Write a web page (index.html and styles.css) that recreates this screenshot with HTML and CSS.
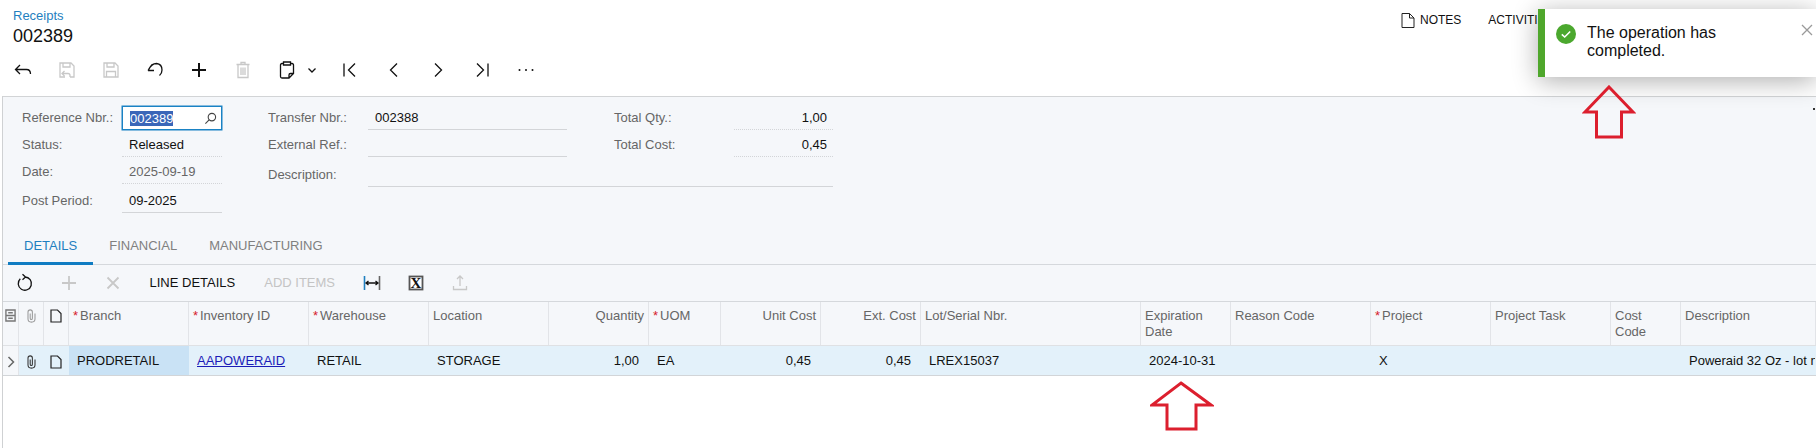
FILE: index.html
```
<!DOCTYPE html>
<html lang="en">
<head>
<meta charset="utf-8">
<title>Receipts</title>
<link rel="stylesheet" href="styles.css">
</head>
<body>
<div class="page">
  <header class="head">
    <div class="titlebar">
      <div class="title">
        <a class="crumb">Receipts</a>
        <div class="docnum">002389</div>
      </div>
      <div class="tools">
        <span class="tool">
          <svg class="ic-note" viewBox="0 0 14 15"><path d="M1 .5H8.5L13 5V14.5H1Z M8.5 .5V5H13"/></svg>NOTES
        </span>
        <span class="tool">ACTIVITIES</span>
      </div>
    </div>
    <div class="bar">
      <button class="ib"><svg viewBox="0 0 20 20"><path d="M7 5 2.500 9.500 7 14M2.500 9.500H13.500Q17.500 9.500 17.500 14"/></svg></button>
      <button class="ib off"><svg viewBox="0 0 20 20"><path d="M8 17H3V3H14L17 6V17H13M6 3V7H13V3M5 13.500H11Q13 13.500 13 15.500V17M7.500 11 5 13.500 7.500 16"/></svg></button>
      <button class="ib off"><svg viewBox="0 0 20 20"><path d="M3 3H14L17 6V17H3ZM6 3V7H13V3M5.500 17V11.500H14.500V17"/></svg></button>
      <button class="ib"><svg viewBox="0 0 20 20"><path d="M3 10.500 7 4.500M3 10.500 9 10.500M3.600 9.600Q6.500 3.500 11.500 3.500 17 4 17 10 17 13.500 14.500 15.500"/></svg></button>
      <button class="ib"><svg class="thick" viewBox="0 0 20 20"><path d="M10 3V17M3 10H17"/></svg></button>
      <button class="ib off"><svg viewBox="0 0 20 20"><path d="M3.500 4.500H16.500M8 4.500V2.500H12V4.500M5 4.500V17.500H15V4.500M8 7.500V15M12 7.500V15M10 7.500V15"/></svg></button>
      <button class="ib wide">
        <svg viewBox="0 0 20 20"><path d="M6.500 3.500H5Q3.500 3.500 3.500 5V16.500Q3.500 18 5 18H12L16.500 13.500V5Q16.500 3.500 15 3.500H13.500M6.500 2H13.500V5H6.500ZM12 18V15Q12 13.500 13.500 13.500H16.500"/></svg>
        <svg class="mini" viewBox="0 0 10 10"><path d="M1.500 3.500 5 7 8.500 3.500"/></svg>
      </button>
      <button class="ib"><svg viewBox="0 0 20 20"><path d="M4 3.500V16.500M15 3.500 8.500 10 15 16.500"/></svg></button>
      <button class="ib"><svg viewBox="0 0 20 20"><path d="M13 3.500 6.500 10 13 16.500"/></svg></button>
      <button class="ib"><svg viewBox="0 0 20 20"><path d="M7 3.500 13.500 10 7 16.500"/></svg></button>
      <button class="ib"><svg viewBox="0 0 20 20"><path d="M16 3.500V16.500M5 3.500 11.500 10 5 16.500"/></svg></button>
      <button class="ib"><svg viewBox="0 0 20 20"><circle class="dot" cx="3.500" cy="10" r="1"/><circle class="dot" cx="10" cy="10" r="1"/><circle class="dot" cx="16.500" cy="10" r="1"/></svg></button>
    </div>
  </header>

  <main class="main">
    <section class="form">
      <div class="fgrid left">
        <label class="lb">Reference Nbr.:</label>
        <div class="selector"><span class="sel">002389</span>
          <svg class="search" viewBox="0 0 14 14"><circle cx="8.500" cy="5.500" r="4"/><path d="M5.500 8.500 1.500 12.500"/></svg>
        </div>
        <label class="lb">Status:</label><div class="val dots">Released</div>
        <label class="lb">Date:</label><div class="val dots mut">2025-09-19</div>
        <label class="lb">Post Period:</label><div class="val line">09-2025</div>
      </div>
      <div class="fgrid right">
        <label class="lb">Transfer Nbr.:</label><div class="val line">002388</div>
        <span></span>
        <label class="lb">Total Qty.:</label><div class="val dots num">1,00</div>
        <label class="lb">External Ref.:</label><div class="val line"></div>
        <span></span>
        <label class="lb">Total Cost:</label><div class="val dots num">0,45</div>
        <label class="lb">Description:</label><div class="val line span"></div>
      </div>
      <i class="speck"></i>
    </section>

    <nav class="tabs">
      <a class="tab on">DETAILS</a>
      <a class="tab">FINANCIAL</a>
      <a class="tab">MANUFACTURING</a>
    </nav>

    <div class="gridbar">
      <button class="ib"><svg viewBox="0 0 20 20"><path d="M5.300 5.800A6.600 6.600 0 1 0 10 4M7.500 1.200 10.500 4 7.500 6.800"/></svg></button>
      <button class="ib off"><svg class="wideline" viewBox="0 0 20 20"><path d="M10 3V17M3 10H17"/></svg></button>
      <button class="ib off"><svg class="wideline" viewBox="0 0 20 20"><path d="M4.500 4.500 15.500 15.500M15.500 4.500 4.500 15.500"/></svg></button>
      <button class="tb">LINE DETAILS</button>
      <button class="tb off">ADD ITEMS</button>
      <button class="ib"><svg viewBox="0 0 20 20"><path class="fit-l" d="M2.500 3V17"/><path class="fit-r" d="M17.500 3V17"/><path d="M4 10H16M6.500 8 4 10 6.500 12M13.500 8 16 10 13.500 12"/></svg></button>
      <button class="ib"><svg viewBox="0 0 20 20"><rect class="xl" x="3.500" y="3.500" width="13" height="13"/><text class="xl-t" x="10" y="15">X</text></svg></button>
      <button class="ib off"><svg viewBox="0 0 20 20"><path d="M10 3V13M7 6 10 3 13 6M3.500 13V16.500H16.500V13"/></svg></button>
    </div>

    <div class="grid">
      <div class="row hdr">
        <div class="c"><svg class="gi gray" viewBox="0 0 12 14"><path d="M1 1H11V13H1ZM1 7H11M3.500 4H8.500M3.500 10H8.500"/></svg></div>
        <div class="c"><svg class="gi clip lite" viewBox="0 0 10 16"><path d="M9 5V11.500Q9 15 5 15 1 15 1 11.500V3.500Q1 1 3.500 1 6 1 6 3.500V10.500Q6 12 4.800 12 3.500 12 3.500 10.500V5"/></svg></div>
        <div class="c"><svg class="gi doc" viewBox="0 0 12 14"><path d="M1 1H7.500L11 4.500V13H1Z"/></svg></div>
        <div class="c"><span class="req">*</span>Branch</div>
        <div class="c"><span class="req">*</span>Inventory ID</div>
        <div class="c"><span class="req">*</span>Warehouse</div>
        <div class="c">Location</div>
        <div class="c r">Quantity</div>
        <div class="c"><span class="req">*</span>UOM</div>
        <div class="c r">Unit Cost</div>
        <div class="c r">Ext. Cost</div>
        <div class="c">Lot/Serial Nbr.</div>
        <div class="c">Expiration Date</div>
        <div class="c">Reason Code</div>
        <div class="c"><span class="req">*</span>Project</div>
        <div class="c">Project Task</div>
        <div class="c">Cost Code</div>
        <div class="c">Description</div>
      </div>
      <div class="row data">
        <div class="c lead"><svg class="gi chev" viewBox="0 0 8 12"><path d="M1.500 1 6.500 6 1.500 11"/></svg></div>
        <div class="c"><svg class="gi clip" viewBox="0 0 10 16"><path d="M9 5V11.500Q9 15 5 15 1 15 1 11.500V3.500Q1 1 3.500 1 6 1 6 3.500V10.500Q6 12 4.800 12 3.500 12 3.500 10.500V5"/></svg></div>
        <div class="c"><svg class="gi doc" viewBox="0 0 12 14"><path d="M1 1H7.500L11 4.500V13H1Z"/></svg></div>
        <div class="c cur">PRODRETAIL</div>
        <div class="c"><a class="link">AAPOWERAID</a></div>
        <div class="c">RETAIL</div>
        <div class="c">STORAGE</div>
        <div class="c r">1,00</div>
        <div class="c">EA</div>
        <div class="c r">0,45</div>
        <div class="c r">0,45</div>
        <div class="c">LREX15037</div>
        <div class="c">2024-10-31</div>
        <div class="c"></div>
        <div class="c">X</div>
        <div class="c"></div>
        <div class="c"></div>
        <div class="c">Poweraid 32 Oz - lot number</div>
      </div>
    </div>
  </main>

  <aside class="toast">
    <svg class="ok" viewBox="0 0 20 20"><circle cx="10" cy="10" r="10"/><path d="M5.800 10.300 8.700 13 14.200 7.500"/></svg>
    <p class="msg">The operation has completed.</p>
    <svg class="close" viewBox="0 0 12 12"><path d="M1 1 11 11M11 1 1 11"/></svg>
  </aside>

  <svg class="arrow a1" viewBox="0 0 54 54"><path d="M27 2 51 27H39.500V52H14.500V27H3Z"/></svg>
  <svg class="arrow a2" viewBox="0 0 64 50"><path d="M31 2 61 24H46V48H17V24H2Z"/></svg>
</div>
</body>
</html>
```
FILE: styles.css
```
* { box-sizing: border-box; }
html, body { margin: 0; padding: 0; background: #fff; }
body { font: 13px/16px "Liberation Sans", Arial, sans-serif; color: #111; }
button { font: inherit; border: 0; background: none; padding: 0; margin: 0; color: inherit; }
p { margin: 0; }

.page { position: relative; width: 1816px; height: 448px; overflow: hidden; }

/* page header */
.head { height: 96px; }
.titlebar { display: flex; justify-content: space-between; height: 50px; padding: 8px 0 0 13px; }
.crumb { display: block; color: #1f7fc0; font-size: 13px; line-height: 16px; }
.docnum { font-size: 18px; line-height: 24px; color: #111; }
.tools { display: flex; gap: 27px; width: 415px; padding-top: 4px; font-size: 12px; line-height: 16px; }
.tool { display: flex; align-items: center; height: 16px; color: #111; }
.ic-note { width: 14px; height: 15px; margin-right: 5px; fill: none; stroke: #222; stroke-width: 1; }

.bar { display: flex; height: 39px; padding-left: 1px; align-items: center; }
.ib { display: flex; flex: none; align-items: center; justify-content: center; width: 44px; height: 36px; color: #111; }
.ib svg { width: 20px; height: 20px; fill: none; stroke: currentColor; stroke-width: 1.3; }
.ib.off { color: #c8c8c8; }
.ib.wide { width: 63px; justify-content: flex-start; padding-left: 12px; gap: 10px; }
.ib .mini { width: 10px; height: 10px; }
.ib .thick { stroke-width: 2; }
.ib .wideline { stroke-width: 1.8; }
.ib .dot { fill: currentColor; stroke: none; }

/* main panel */
.main { margin-left: 2px; height: 352px; border-left: 1px solid #cfd1d3; }
.form { position: relative; display: flex; height: 132px; padding: 9px 0 0 19px; background: #f5f7fa; border-top: 1px solid #d2d4d6; }
.fgrid { display: grid; }
.left { grid-template-columns: 100px 100px; grid-template-rows: 24px 27px 27px 29px; }
.right { margin-left: 46px; grid-template-columns: 100px 199px 47px 120px 99px; grid-template-rows: 24px 27px 30px; }
.lb { display: flex; align-items: flex-end; color: #666; padding-bottom: 4.5px; height: 100%; }
.val { display: flex; align-items: flex-end; padding: 0 7px 3px; height: 100%; color: #111; }
.val.span { grid-column: 2 / -1; }
.val.mut { color: #666; }
.val.line { border-bottom: 1px solid #d3d5d8; }
.val.dots { border-bottom: 1px dotted #d3d5d8; }
.val.num { justify-content: flex-end; padding-right: 6px; }
.selector { position: relative; display: flex; align-items: center; padding-left: 7px; background: #fff; border: 1px solid #1a82c4; box-shadow: 0 0 0 .5px #1a82c4; }
.sel { background: #3a66b8; color: #fff; line-height: 15px; }
.search { position: absolute; right: 4px; top: 5px; width: 13px; height: 13px; fill: none; stroke: #444; stroke-width: 1.2; }
.speck { position: absolute; right: 1px; top: 11px; width: 2px; height: 2px; background: #333; }

.tabs { display: flex; height: 37px; padding: 0 0 0 5px; background: #f5f7fa; border-bottom: 1px solid #d5d8dc; }
.tab { height: 37px; padding: 10px 16px 0; color: #808080; border-bottom: 3px solid transparent; }
.tab.on { color: #1f7fc0; border-bottom-color: #0f7cc2; }

.gridbar { display: flex; align-items: center; height: 36px; background: #f5f7fa; }
.tb { padding: 0 14.5px; height: 36px; color: #111; }
.tb.off { color: #c4c4c4; }
.fit-l { stroke: #1f7fc0; stroke-width: 1.6; }
.fit-r { stroke: #666; stroke-width: 1.6; }
.xl { fill: #fff; stroke: #555; stroke-width: 1.8; }
.xl-t { font: bold 15px "Liberation Serif", serif; fill: #111; stroke: none; text-anchor: middle; }

/* grid */
.row { display: grid; grid-template-columns: 16px 25px 25px 120px 120px 120px 120px 100px 72px 100px 100px 220px 90px 140px 120px 120px 70px 1fr; }
.c { min-width: 0; white-space: nowrap; overflow: hidden; border-right: 1px solid #e2e4e8; }
.c.r { text-align: right; }
.hdr { height: 45px; background: #f5f7fa; border-top: 1px solid #d5d8dc; border-bottom: 1px solid #dfe1e4; color: #666; }
.hdr .c { padding: 6px 4px 0; white-space: normal; }
.hdr .c:nth-child(-n+3) { padding: 6px 0 0; text-align: center; }
.req { display: inline-block; width: 7px; color: #d6202a; }
.data { height: 30px; background: #e3f1fa; border-bottom: 1px solid #d2d5d8; }
.data .c { padding: 0 8px; line-height: 30px; border-right-color: #e3f1fa; }
.data .c.r { padding-right: 9px; }
.data .c:nth-child(-n+3) { padding: 0; text-align: center; }
.data .lead { background: #f5f7fa; border-right-color: #e2e4e8; }
.data .cur { background: #c9e2f5; border-right-color: #c9e2f5; }
.link { color: #1c1cb8; text-decoration: underline; }
.gi { display: inline-block; vertical-align: middle; fill: none; stroke: #222; stroke-width: 1.2; }
.hdr .gi { margin-top: -2px; }
.gi.gray { width: 11px; height: 13px; stroke: #777; stroke-width: 1.5; }
.gi.clip { width: 9px; height: 14px; stroke: #333; }
.gi.clip.lite { stroke: #9a9a9a; }
.gi.doc { width: 12px; height: 14px; }
.gi.chev { width: 8px; height: 12px; stroke: #666; stroke-width: 1.5; }

/* overlays */
.toast { position: absolute; left: 1538px; top: 9px; width: 278px; height: 68px; display: flex; padding: 15px 0 0 11px; background: #fff; border-left: 7px solid #4fa72c; box-shadow: 0 4px 26px rgba(0, 0, 0, .32); }
.ok { flex: none; width: 20px; height: 20px; margin-right: 11px; }
.ok circle { fill: #4ba82e; }
.ok path { fill: none; stroke: #fff; stroke-width: 1.6; }
.msg { width: 190px; font-size: 16px; line-height: 18px; color: #111; }
.close { position: absolute; right: 3px; top: 15px; width: 12px; height: 12px; fill: none; stroke: #9a9a9a; stroke-width: 1.3; }

.arrow { position: absolute; fill: none; stroke: #dc1f2e; stroke-width: 3; }
.a1 { left: 1582px; top: 85px; width: 54px; height: 54px; }
.a2 { left: 1150px; top: 381px; width: 64px; height: 50px; }
```
